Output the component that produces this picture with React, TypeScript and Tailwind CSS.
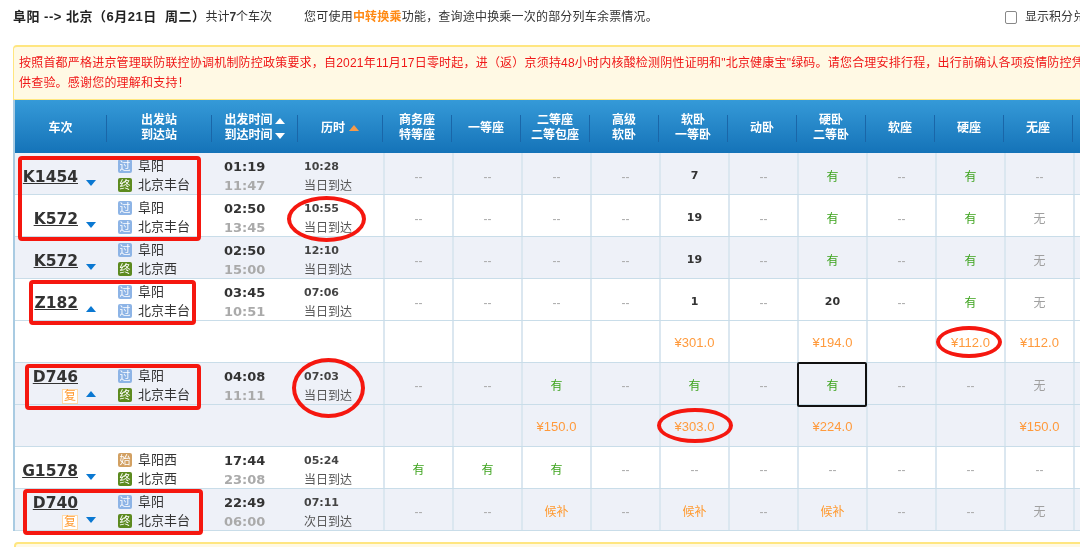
const Dash = () => <span className="text-[#aaaaaa] text-[12px]">--</span>;

const cellText = (v: string) => {
  if (v === "--") return <Dash />;
  if (v === "") return null;
  if (v === "有") return <span className="text-[#3da31d] text-[12px]">有</span>;
  if (v === "无") return <span className="text-[#a0a0a0] text-[12px]">无</span>;
  if (v === "候补") return <span className="text-[#ff9a30] text-[12px]">候补</span>;
  if (v.startsWith("¥"))
    return <span className="text-[#ff9a3c] text-[13px] font-['Liberation_Sans',sans-serif]">{v}</span>;
  return <span className="text-[#333] text-[11px] font-bold font-['DejaVu_Sans',sans-serif]">{v}</span>;
};

const Tri = ({ up, color }: { up?: boolean; color: string }) => (
  <svg width="10" height="6" viewBox="0 0 10 6" className="shrink-0">
    <polygon points={up ? "5,0 10,6 0,6" : "0,0 10,0 5,6"} fill={color} />
  </svg>
);

const StationIcon = ({ kind }: { kind: string }) => {
  const bg = kind === "过" ? "bg-[#8db4e6]" : kind === "终" ? "bg-[#5c8a1f]" : "bg-[#d2a062]";
  return (
    <span className={`${bg} w-[14px] h-[14px] rounded-[2px] flex items-center justify-center text-white text-[11px] leading-none shrink-0`}>
      {kind}
    </span>
  );
};

type Train = {
  no: string;
  fu?: boolean;
  up?: boolean;
  from: [string, string];
  to: [string, string];
  dep: string;
  arr: string;
  dur: string;
  day: string;
  seats: string[];
  tint: boolean;
  seatPad: string;
  price?: string[];
};

const trains: Train[] = [
  { no: "K1454", from: ["过", "阜阳"], to: ["终", "北京丰台"], dep: "01:19", arr: "11:47", dur: "10:28", day: "当日到达", seats: ["--", "--", "--", "--", "7", "--", "有", "--", "有", "--"], tint: true, seatPad: "pt-[6px]" },
  { no: "K572", from: ["过", "阜阳"], to: ["过", "北京丰台"], dep: "02:50", arr: "13:45", dur: "10:55", day: "当日到达", seats: ["--", "--", "--", "--", "19", "--", "有", "--", "有", "无"], tint: false, seatPad: "pt-[6px]" },
  { no: "K572", from: ["过", "阜阳"], to: ["终", "北京西"], dep: "02:50", arr: "15:00", dur: "12:10", day: "当日到达", seats: ["--", "--", "--", "--", "19", "--", "有", "--", "有", "无"], tint: true, seatPad: "pt-[6px]" },
  { no: "Z182", up: true, from: ["过", "阜阳"], to: ["过", "北京丰台"], dep: "03:45", arr: "10:51", dur: "07:06", day: "当日到达", seats: ["--", "--", "--", "--", "1", "--", "20", "--", "有", "无"], tint: false, seatPad: "pt-[6px]", price: ["", "", "", "", "¥301.0", "", "¥194.0", "", "¥112.0", "¥112.0"] },
  { no: "D746", fu: true, up: true, from: ["过", "阜阳"], to: ["终", "北京丰台"], dep: "04:08", arr: "11:11", dur: "07:03", day: "当日到达", seats: ["--", "--", "有", "--", "有", "--", "有", "--", "--", "无"], tint: true, seatPad: "pt-[4px]", price: ["", "", "¥150.0", "", "¥303.0", "", "¥224.0", "", "", "¥150.0"] },
  { no: "G1578", from: ["始", "阜阳西"], to: ["终", "北京西"], dep: "17:44", arr: "23:08", dur: "05:24", day: "当日到达", seats: ["有", "有", "有", "--", "--", "--", "--", "--", "--", "--"], tint: false, seatPad: "pt-[4px]" },
  { no: "D740", fu: true, from: ["过", "阜阳"], to: ["终", "北京丰台"], dep: "22:49", arr: "06:00", dur: "07:11", day: "次日到达", seats: ["--", "--", "候补", "--", "候补", "--", "候补", "--", "--", "无"], tint: true, seatPad: "pt-[4px]" },
];

const heads: [string, string?][] = [
  ["商务座", "特等座"],
  ["一等座"],
  ["二等座", "二等包座"],
  ["高级", "软卧"],
  ["软卧", "一等卧"],
  ["动卧"],
  ["硬卧", "二等卧"],
  ["软座"],
  ["硬座"],
  ["无座"],
];

const HeadCell = ({ className, children }: { className: string; children: React.ReactNode }) => (
  <div className={`${className} h-[27px] flex flex-col items-center justify-center border-r border-[#1a66a8] text-white text-[12px] font-bold leading-[15px] shrink-0`}>
    {children}
  </div>
);

const RedBox = ({ className }: { className: string }) => (
  <div className={`absolute border-[4px] border-[#f5170f] pointer-events-none ${className}`} />
);

const Row = ({ t }: { t: Train }) => {
  const bg = t.tint ? "bg-[#eef1f8]" : "bg-white";
  return (
    <>
      <div className={`${bg} flex h-[42px] border-b border-[#c9dde9]`}>
        <div className={`w-[93px] shrink-0 flex justify-end items-center pr-[12px] gap-[8px] ${t.fu ? "pt-[4px]" : "pt-[6px]"}`}>
          <div className="flex flex-col items-end">
            <span className="font-['DejaVu_Sans',sans-serif] font-bold text-[#333] text-[15.5px] leading-[18px] underline">{t.no}</span>
            {t.fu && (
              <span className="mt-[3px] w-[16px] h-[15px] border border-[#ffd9a8] bg-white text-[#ff9a30] text-[12px] leading-[13px] text-center">复</span>
            )}
          </div>
          <div className={t.fu ? "mt-[16px]" : "mt-[12px]"}>
            <Tri up={t.up} color="#0a78d2" />
          </div>
        </div>
        <div className="w-[105px] shrink-0 pl-[10px] pt-[4px] flex flex-col justify-center gap-[5px] text-[#333] text-[13px] leading-[14px]">
          <div className="flex items-center gap-[6px]"><StationIcon kind={t.from[0]} />{t.from[1]}</div>
          <div className="flex items-center gap-[6px]"><StationIcon kind={t.to[0]} />{t.to[1]}</div>
        </div>
        <div className="w-[86px] shrink-0 pl-[11px] pt-[5px] flex flex-col justify-center gap-[3px] font-['DejaVu_Sans',sans-serif] font-bold text-[13px] leading-[16px]">
          <span className="text-[#333]">{t.dep}</span>
          <span className="text-[#aaaaaa]">{t.arr}</span>
        </div>
        <div className="w-[84px] shrink-0 pl-[5px] pt-[6px] flex flex-col justify-center gap-[3px] leading-[16px]">
          <span className="font-['DejaVu_Sans',sans-serif] font-bold text-[11px] text-[#444]">{t.dur}</span>
          <span className="text-[12px] text-[#555]">{t.day}</span>
        </div>
        {t.seats.map((s, i) => (
          <div key={i} className={`w-[69px] shrink-0 border-l-2 border-[#dbe7f0] flex items-center justify-center ${t.seatPad}`}>
            {cellText(s)}
          </div>
        ))}
        <div className="w-[69px] shrink-0 border-l-2 border-[#dbe7f0]" />
      </div>
      {t.price && (
        <div className={`${bg} flex h-[42px] border-b border-[#c9dde9]`}>
          <div className="w-[368px] shrink-0" />
          {t.price.map((s, i) => (
            <div key={i} className="w-[69px] shrink-0 border-l-2 border-[#dbe7f0] flex items-center justify-center pt-[2px]">
              {cellText(s)}
            </div>
          ))}
          <div className="w-[69px] shrink-0 border-l-2 border-[#dbe7f0]" />
        </div>
      )}
    </>
  );
};

export default function App() {
  return (
    <div className="relative w-[1080px] h-[547px] overflow-hidden bg-white blur-[0.3px] font-['Liberation_Sans','Noto_Sans_CJK_SC',sans-serif] text-[12px] text-[#333]">
      <div className="h-[45px] flex items-start pt-[9px] pl-[13px] whitespace-nowrap leading-[16px] relative">
        <span className="font-bold text-[#222] text-[13px] tracking-[0.5px]">阜阳 --&gt; 北京（6月21日&nbsp;&nbsp;周二）</span>
        <span>共计<b>7</b>个车次</span>
        <span className="ml-[32px] tracking-[0.2px]">您可使用<b className="text-[#ff8a14]">中转换乘</b>功能，查询途中换乘一次的部分列车余票情况。</span>
        <div className="absolute left-[1005px] top-[9px] flex items-center gap-[8px]">
          <span className="w-[12px] h-[13px] border border-[#888] rounded-[2px] bg-white" />
          <span>显示积分兑换</span>
        </div>
      </div>

      <div className="ml-[13px] w-[1120px] h-[55px] border-t-2 border-x border-b border-[#ffe680] rounded-t-[4px] bg-[#fff9e4] text-[#f01818] pl-[5px] pt-[6px] leading-[20px] whitespace-nowrap tracking-[0.2px]">
        <div>按照首都严格进京管理联防联控协调机制防控政策要求，自2021年11月17日零时起，进（返）京须持48小时内核酸检测阴性证明和"北京健康宝"绿码。请您合理安排行程，出行前确认各项疫情防控凭证</div>
        <div>供查验。感谢您的理解和支持！</div>
      </div>

      <div className="ml-[13px] w-[1140px] border-l-2 border-[#a9cbe2]">
        <div className="h-[53px] flex items-center pt-[3px] bg-gradient-to-b from-[#359ad8] to-[#1473b8]">
          <HeadCell className="w-[92px]">车次</HeadCell>
          <HeadCell className="w-[105px]"><span>出发站</span><span>到达站</span></HeadCell>
          <HeadCell className="w-[86px]">
            <span className="flex items-center gap-[2px]">出发时间<Tri up color="#ffffff" /></span>
            <span className="flex items-center gap-[2px]">到达时间<Tri color="#ffffff" /></span>
          </HeadCell>
          <HeadCell className="w-[85px]"><span className="flex items-center gap-[4px]">历时<Tri up color="#f59a4a" /></span></HeadCell>
          {heads.map((h, i) => (
            <HeadCell key={i} className="w-[69px]">
              <span>{h[0]}</span>
              {h[1] && <span>{h[1]}</span>}
            </HeadCell>
          ))}
        </div>
        {trains.map((t, i) => (
          <Row key={i} t={t} />
        ))}
      </div>

      <div className="absolute left-[14px] top-[542px] w-[1120px] h-[20px] border-2 border-[#ffe680] rounded-[4px] bg-[#fff9e4]" />

      <RedBox className="left-[18px] top-[156px] w-[183px] h-[85px] rounded-[4px]" />
      <RedBox className="left-[29px] top-[280px] w-[167px] h-[45px] rounded-[4px]" />
      <RedBox className="left-[25px] top-[364px] w-[176px] h-[46px] rounded-[4px]" />
      <RedBox className="left-[23px] top-[489px] w-[180px] h-[46px] rounded-[4px]" />
      <RedBox className="left-[287px] top-[196px] w-[79px] h-[46px] rounded-[50%]" />
      <RedBox className="left-[292px] top-[358px] w-[73px] h-[60px] rounded-[50%]" />
      <RedBox className="left-[936px] top-[326px] w-[66px] h-[32px] rounded-[50%]" />
      <RedBox className="left-[657px] top-[408px] w-[76px] h-[35px] rounded-[50%]" />
      <div className="absolute left-[797px] top-[362px] w-[70px] h-[45px] border-2 border-[#111] rounded-[2px]" />
    </div>
  );
}
